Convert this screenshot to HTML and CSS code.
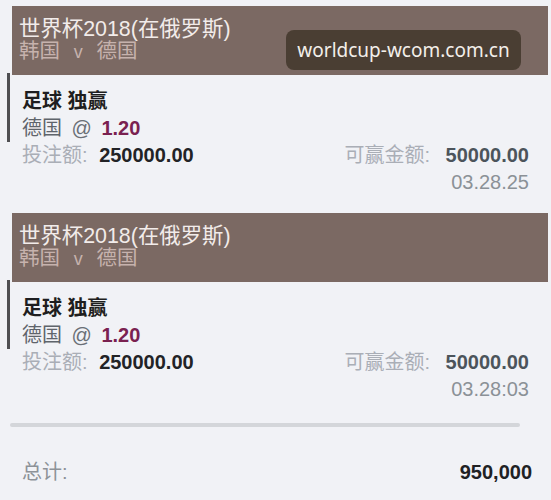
FILE: index.html
```html
<!DOCTYPE html>
<html lang="zh">
<head>
<meta charset="utf-8">
<title>注单</title>
<link rel="stylesheet" href="styles.css">
</head>
<body>
<div class="page">
  <div class="card">
    <div class="head">
      <div class="title">世界杯2018(在俄罗斯)</div>
      <div class="match">韩国 <span class="vs">v</span> 德国</div>
    </div>
    <div class="sel">
      <div class="market">足球 独赢</div>
      <div class="pick"><span class="team">德国</span> <span class="at">@</span> <span class="odds">1.20</span></div>
    </div>
    <div class="row">
      <div><span class="lbl">投注额:</span> <span class="stake">250000.00</span></div>
      <div><span class="lbl">可赢金额:</span> <span class="win">50000.00</span></div>
    </div>
    <div class="time">03.28.25</div>
  </div>

  <div class="card">
    <div class="head">
      <div class="title">世界杯2018(在俄罗斯)</div>
      <div class="match">韩国 <span class="vs">v</span> 德国</div>
    </div>
    <div class="sel">
      <div class="market">足球 独赢</div>
      <div class="pick"><span class="team">德国</span> <span class="at">@</span> <span class="odds">1.20</span></div>
    </div>
    <div class="row">
      <div><span class="lbl">投注额:</span> <span class="stake">250000.00</span></div>
      <div><span class="lbl">可赢金额:</span> <span class="win">50000.00</span></div>
    </div>
    <div class="time">03.28:03</div>
  </div>

  <div class="divider"></div>
  <div class="total">
    <span class="lbl2">总计:</span>
    <span class="sum">950,000</span>
  </div>

  <div class="mark">worldcup-wcom.com.cn</div>
</div>
</body>
</html>
```

FILE: styles.css
```css
html, body {
  margin: 0;
  padding: 0;
  background: #f1f2f6;
}
body {
  font-family: "Liberation Sans", "Noto Sans CJK SC", sans-serif;
  font-size: 20px;
  color: #222;
}
.page {
  position: relative;
  width: 551px;
  height: 500px;
  overflow: hidden;
  padding-top: 6px;
  box-sizing: border-box;
}
.card {
  margin: 0 3px 0 7px;
}
.card + .card {
  margin-top: 18px;
}
.head {
  margin-left: 5px;
  background: #7b6963;
  padding: 12px 7px;
  line-height: 22px;
}
.title {
  color: #f2ecea;
  font-size: 21.4px;
}
.match {
  color: #c6b2ad;
  font-size: 20.5px;
}
.vs {
  margin: 0 8px;
  font-size: 18px;
}
.sel {
  border-left: 3px solid #4f4f52;
  padding: 15px 0 0 12px;
  margin-top: -2px;
  line-height: 27px;
}
.market {
  font-weight: bold;
  color: #1e1e20;
}
.team {
  color: #5f646b;
}
.at {
  color: #6a6f76;
  margin: 0 4px;
}
.odds {
  color: #7a2150;
  font-weight: bold;
}
.row {
  display: flex;
  justify-content: space-between;
  padding: 0 19px 0 15px;
  line-height: 27px;
}
.lbl {
  color: #aaaeb6;
}
.stake {
  font-weight: bold;
  color: #222326;
  margin-left: 6px;
}
.win {
  font-weight: bold;
  color: #4c545b;
  margin-left: 10px;
}
.time {
  text-align: right;
  padding-right: 19px;
  color: #8b9197;
  line-height: 26px;
}
.divider {
  margin: 21px 31px 0 10px;
  height: 4px;
  border-radius: 2px;
  background: #d4d6da;
}
.total {
  display: flex;
  justify-content: space-between;
  padding: 33px 19px 0 22px;
  line-height: 24px;
}
.lbl2 {
  color: #8d9298;
}
.sum {
  font-weight: bold;
  color: #202124;
}
.mark {
  position: absolute;
  left: 286px;
  top: 30px;
  width: 235px;
  height: 40px;
  box-sizing: border-box;
  border-radius: 8px;
  background: #4a3e33;
  color: #f3efea;
  font-family: "Noto Sans", sans-serif;
  font-size: 19px;
  line-height: 40px;
  text-align: center;
}
```
